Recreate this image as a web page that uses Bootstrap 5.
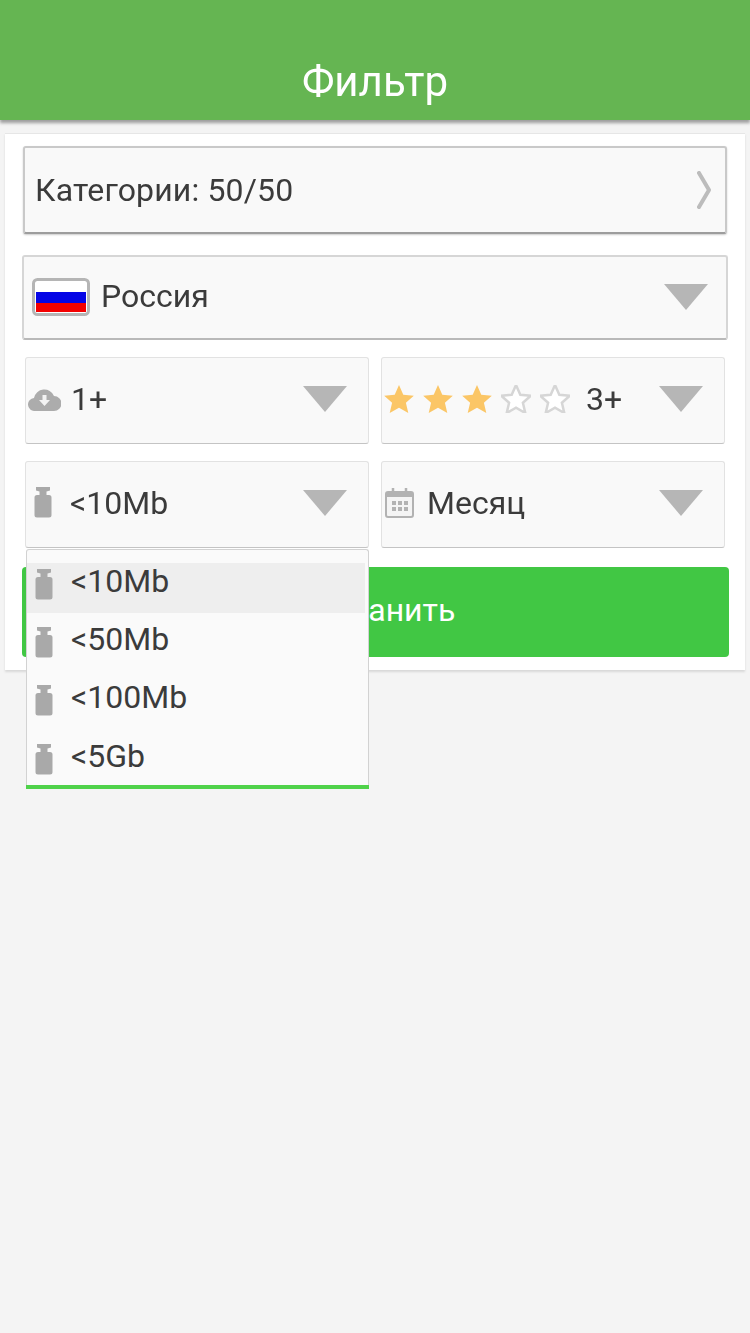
<!DOCTYPE html>
<html lang="ru">
<head>
<meta charset="utf-8">
<title>Фильтр</title>
<link rel="stylesheet" href="https://cdn.jsdelivr.net/npm/bootstrap@5.3.0/dist/css/bootstrap.min.css">
<style>
html,body{height:100%}
body{background:#f4f4f4;font-family:Roboto,"Liberation Sans",sans-serif;color:#3b3b3b;font-size:32px;line-height:1}
.app-head{height:120px;background:#65b552;color:#fff;font-size:42px;padding-top:62px;line-height:40px;box-shadow:0 3px 3px rgba(100,100,100,.6);filter:blur(.4px)}
.sheet{margin:13px 5px 0;padding:12px 17px 13px;height:537px;background:#fff;box-shadow:0 2px 2px #d8d8d8;border-top:1px solid #e6e6e6;position:relative;filter:blur(.4px)}
.tile{background:#f9f9f9;border-radius:3px;border:1px solid #e2e2e2;border-bottom:2px solid #bdbdbd}
.tile-strong{border:2px solid #c9c9c9;border-bottom-color:#9d9d9d;margin:0 1px;height:88px;padding:0 14px 0 10px;box-shadow:0 1px 2px #ccc;letter-spacing:.15px}
.tile-country{height:85px;margin-top:21px;border:2px solid #d6d6d6;border-bottom-color:#b9b9b9;padding:0 18px 2px 8px}
.tile-country .txt{margin-left:11px;margin-bottom:2px}
.duo{margin:17px 3px 0;gap:12px}
.tile-half{flex:0 0 344px;height:87px;padding:0 21px 4px 0;border-bottom-width:1px;border-bottom-color:#c4c4c4}
.lead-ico{flex:none;display:block}
.txt{white-space:nowrap}
.ico-cloud{margin:0 10px 0 2px}
.star-row{margin-left:2px;gap:9px}
.ico-weight{margin:0 18px 0 8px}
.ico-cal{margin:0 13px 0 3px}
.save-btn{position:absolute;left:17px;top:433px;width:707px;height:90px;background:#41c744;border:0;border-radius:4px;color:#fff;font-size:32px;padding:0 0 4px}
.pick-menu{position:absolute;left:21px;top:415px;width:343px;height:240px;background:#fafafa;border:1px solid #d2d2d2;border-bottom:0;border-radius:3px 3px 0 0;padding-top:13px;z-index:5}
.pick-item{height:58.5px;padding-left:8px;margin-right:3px;padding-bottom:23px}
.pick-item .lead-ico{margin-right:18px;margin-bottom:-7px}
.pick-item.on{background:#eeeeee;height:50px;margin-bottom:8px;padding-bottom:15px}
.pick-menu::after{content:"";position:absolute;left:-1px;right:-1px;bottom:0;height:4px;background:#4fd24a}
</style>
</head>
<body>
<svg width="0" height="0" class="position-absolute">
<defs>
<symbol id="w" viewBox="0 0 18 31"><path d="M2 0h14v3.500l-3.500 1V8H15a2.500 2.500 0 0 1 2.500 2.500V28a2.500 2.500 0 0 1-2.500 2.500H3A2.500 2.500 0 0 1 .5 28V10.500A2.500 2.500 0 0 1 3 8h2.500V4.500L2 3.500z" fill="#a9a9a9"/></symbol>
<symbol id="c" viewBox="0 0 44 26"><path d="M0 0h44L22 26z" fill="#b6b6b6"/></symbol>
<symbol id="s" viewBox="0 0 30 28"><path d="M15 0l4.300 9.700 10.500 1-7.900 7 2.400 10.300L15 22.700 5.700 28l2.400-10.300-7.900-7 10.500-1z"/></symbol>
</defs>
</svg>
<header class="app-head text-center">Фильтр</header>
<main class="sheet">
  <div class="tile tile-strong d-flex align-items-center justify-content-between">
    <span class="txt">Категории: 50/50</span>
    <svg width="14" height="38" viewBox="0 0 14 38" class="lead-ico"><path d="M2 2l10 17L2 36" fill="none" stroke="#bcbcbc" stroke-width="4" stroke-linecap="round" stroke-linejoin="round"/></svg>
  </div>
  <div class="tile tile-country d-flex align-items-center">
    <svg width="58" height="38" viewBox="0 0 58 38" class="lead-ico"><rect x="1.500" y="1.500" width="55" height="35" rx="4" fill="#fff" stroke="#b5b5b5" stroke-width="3"/><rect x="4" y="14" width="50" height="11" fill="#0505e6"/><rect x="4" y="25" width="50" height="9" fill="#f40000"/></svg>
    <span class="txt">Россия</span>
    <svg width="44" height="26" class="lead-ico ms-auto"><use href="#c"/></svg>
  </div>
  <div class="duo d-flex">
    <div class="tile tile-half d-flex align-items-center">
      <svg width="33" height="25" viewBox="0 0 33 25" class="lead-ico ico-cloud"><path d="M7 25a6.500 6.500 0 0 1-1-13 10.500 10.500 0 0 1 20-2 7.500 7.500 0 0 1 0 15z" fill="#acacac"/><path d="M14.500 9h4v5h3.500l-5.500 6-5.500-6h3.500z" fill="#f3f3f3"/></svg>
      <span class="txt">1+</span>
      <svg width="44" height="26" class="lead-ico ms-auto"><use href="#c"/></svg>
    </div>
    <div class="tile tile-half d-flex align-items-center">
      <span class="d-flex star-row">
        <svg width="30" height="28" fill="#fbc666" class="lead-ico"><use href="#s"/></svg>
        <svg width="30" height="28" fill="#fbc666" class="lead-ico"><use href="#s"/></svg>
        <svg width="30" height="28" fill="#fbc666" class="lead-ico"><use href="#s"/></svg>
        <svg width="30" height="28" fill="#fff" stroke="#d6d6d6" stroke-width="2.500" class="lead-ico"><use href="#s"/></svg>
        <svg width="30" height="28" fill="#fff" stroke="#d6d6d6" stroke-width="2.500" class="lead-ico"><use href="#s"/></svg>
      </span>
      <span class="txt ms-3">3+</span>
      <svg width="44" height="26" class="lead-ico ms-auto"><use href="#c"/></svg>
    </div>
  </div>
  <div class="duo d-flex">
    <div class="tile tile-half d-flex align-items-center">
      <svg width="18" height="31" class="lead-ico ico-weight"><use href="#w"/></svg>
      <span class="txt">&lt;10Mb</span>
      <svg width="44" height="26" class="lead-ico ms-auto"><use href="#c"/></svg>
    </div>
    <div class="tile tile-half d-flex align-items-center">
      <svg width="29" height="31" viewBox="0 0 29 31" class="lead-ico ico-cal"><rect x="1" y="5" width="27" height="25" rx="2" fill="#f4f4f4" stroke="#b2b2b2" stroke-width="2"/><rect x="1" y="5" width="27" height="5" fill="#b2b2b2"/><path d="M8 1v7M21 1v7" stroke="#b2b2b2" stroke-width="2.500"/><path d="M7 14h4v4H7zM13 14h4v4h-4zM19 14h4v4h-4zM7 20h4v4H7zM13 20h4v4h-4zM19 20h4v4h-4z" fill="#b2b2b2"/></svg>
      <span class="txt">Месяц</span>
      <svg width="44" height="26" class="lead-ico ms-auto"><use href="#c"/></svg>
    </div>
  </div>
  <button type="button" class="btn save-btn">Сохранить</button>
  <div class="pick-menu">
    <div class="pick-item on d-flex align-items-center"><svg width="18" height="31" class="lead-ico"><use href="#w"/></svg><span class="txt">&lt;10Mb</span></div>
    <div class="pick-item d-flex align-items-center"><svg width="18" height="31" class="lead-ico"><use href="#w"/></svg><span class="txt">&lt;50Mb</span></div>
    <div class="pick-item d-flex align-items-center"><svg width="18" height="31" class="lead-ico"><use href="#w"/></svg><span class="txt">&lt;100Mb</span></div>
    <div class="pick-item d-flex align-items-center"><svg width="18" height="31" class="lead-ico"><use href="#w"/></svg><span class="txt">&lt;5Gb</span></div>
  </div>
</main>
<script src="https://cdn.jsdelivr.net/npm/bootstrap@5.3.0/dist/js/bootstrap.bundle.min.js"></script>
</body>
</html>
